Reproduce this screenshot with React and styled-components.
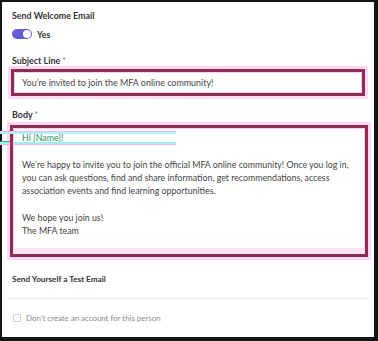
import React from "react";
import styled, { createGlobalStyle } from "styled-components";

const Global = createGlobalStyle`
  html, body { margin: 0; padding: 0; background: #111; }
  * { box-sizing: border-box; }
`;

const Frame = styled.div`
  width: 378px;
  height: 341px;
  background: #141414;
  padding: 2px 4px 4px 2px;
`;

const Panel = styled.div`
  height: 100%;
  background: #fff;
  padding: 8px 6px 0 10px;
  font-family: Lato, "Liberation Sans", sans-serif;
  font-size: 8.9px;
  color: #3a3a3a;
  display: flex;
  flex-direction: column;
`;

const Label = styled.div`
  font-weight: 700;
  line-height: 12px;
  height: 12px;
  color: #333;
  font-size: ${(p) => p.$fs || 8.9}px;
  margin-top: ${(p) => p.$mt || 0}px;
  white-space: nowrap;
`;

const Star = styled.span`
  font-weight: 400;
  color: #777;
  margin-left: 2px;
`;

const ToggleRow = styled.div`
  display: flex;
  align-items: center;
  gap: 5px;
  margin-top: 7px;
  height: 10px;
`;

const Track = styled.div`
  width: 20px;
  height: 10px;
  border-radius: 5px;
  background: #6a5bd4;
  display: flex;
  align-items: center;
  justify-content: flex-end;
  padding: 1px;
`;

const Knob = styled.div`
  width: 8px;
  height: 8px;
  border-radius: 50%;
  background: #fff;
`;

const ToggleText = styled.span`
  font-weight: 700;
  color: #333;
`;

const Field = styled.div`
  position: relative;
  margin-top: ${(p) => p.$mt}px;
  margin-left: ${(p) => p.$ml}px;
  margin-right: ${(p) => p.$mr}px;
  height: ${(p) => p.$h}px;
  border: 3px solid #8d2d52;
  box-shadow: 0 0 0 3px #fcd9f4, inset 0 0 0 1px #f9cdef;
  background: #fff;
  color: #444;
  font-size: ${(p) => p.$fs}px;
  padding: ${(p) => p.$pad};
  line-height: ${(p) => p.$lh}px;
`;

const Greeting = styled.div`
  color: #23915f;
`;

const Para = styled.div`
  margin-top: ${(p) => p.$mt || 0}px;
`;

const Glitch = styled.div`
  position: absolute;
  left: ${(p) => p.$l}px;
  top: ${(p) => p.$t}px;
  width: ${(p) => p.$w}px;
  height: ${(p) => p.$h}px;
  background: ${(p) => p.$c};
`;

const BottomTint = styled.div`
  position: absolute;
  left: 0;
  right: 0;
  bottom: 0;
  height: 6px;
  background: #fde3f7;
`;

const Divider = styled.div`
  height: 1px;
  background: #ececec;
  margin: 13px -2px 0 -4px;
`;

const CheckRow = styled.div`
  display: flex;
  align-items: center;
  gap: 5px;
  margin-top: 13px;
  height: 12px;
  padding-left: 1px;
`;

const Box = styled.div`
  width: 8px;
  height: 8px;
  border: 1px solid #cfcfcf;
  border-radius: 1px;
  background: #fff;
`;

const CheckText = styled.span`
  color: #8a8a8a;
  font-size: 7.9px;
`;

export default function App() {
  return (
    <>
      <Global />
      <Frame>
        <Panel>
          <Label>Send Welcome Email</Label>
          <ToggleRow>
            <Track>
              <Knob />
            </Track>
            <ToggleText>Yes</ToggleText>
          </ToggleRow>
          <Label $mt={16}>
            Subject Line<Star>*</Star>
          </Label>
          <Field $mt={2} $ml={-1} $mr={3} $h={27} $fs={8.95} $pad="0 0 0 8px" $lh={21}>
            You’re invited to join the MFA online community!
          </Field>
          <Label $mt={13}>
            Body<Star>*</Star>
          </Label>
          <Field $mt={4} $ml={-2} $mr={0} $h={132} $fs={8.8} $pad="3px 8px 0 9px" $lh={13.3}>
            <BottomTint />
            <Glitch $l={-13} $t={3} $w={176} $h={1} $c="#f6b8ef" />
            <Glitch $l={-13} $t={4} $w={176} $h={2} $c="#aef3f5" />
            <Glitch $l={-13} $t={14} $w={176} $h={2} $c="#9ef0f2" />
            <Glitch $l={-13} $t={16} $w={176} $h={1} $c="#f4b5ec" />
            <Glitch $l={-3} $t={14} $w={3} $h={3} $c="#d9204a" />
            <Glitch $l={-13} $t={13} $w={10} $h={1} $c="#3aa870" />
            <Greeting>Hi [Name]!</Greeting>
            <Para $mt={13.3}>
              We’re happy to invite you to join the official MFA online community! Once you log in,
              you can ask questions, find and share information, get recommendations, access
              association events and find learning opportunities.
            </Para>
            <Para $mt={13.3}>
              We hope you join us!
              <br />
              The MFA team
            </Para>
          </Field>
          <Label $mt={16} $fs={8.2}>Send Yourself a Test Email</Label>
          <Divider />
          <CheckRow>
            <Box />
            <CheckText>Don’t create an account for this person</CheckText>
          </CheckRow>
        </Panel>
      </Frame>
    </>
  );
}
